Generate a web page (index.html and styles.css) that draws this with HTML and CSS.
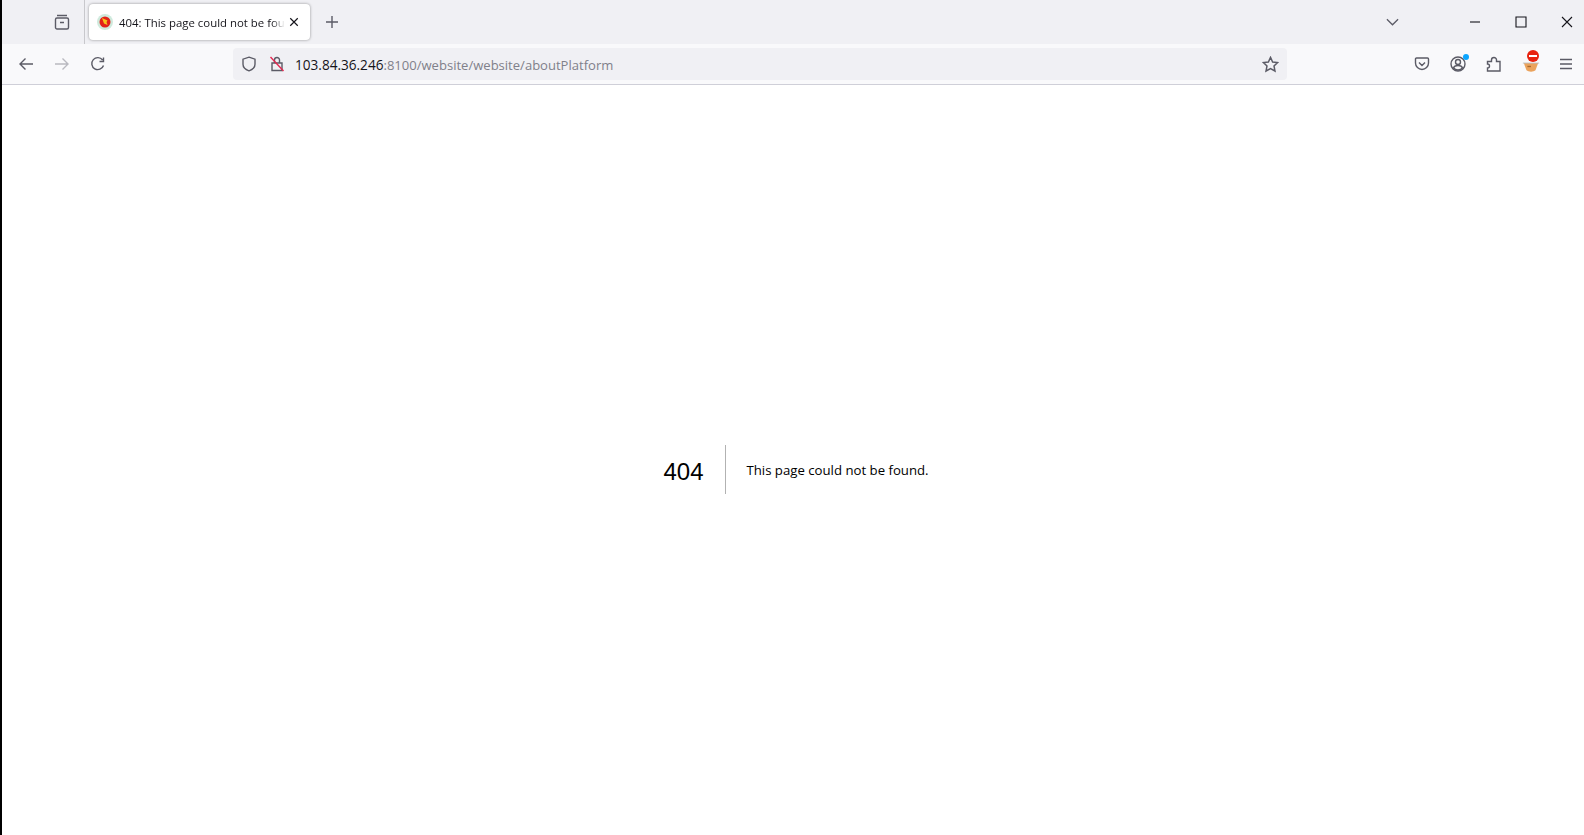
FILE: index.html
```html
<!DOCTYPE html>
<html>
<head>
    <title>404: This page could not be found.</title>
    <link rel="stylesheet" href="styles.css">
</head>
<body>
<div class="screen">

    <!-- tab strip -->
    <div class="tabbar">
        <div class="tabbar-left">
            <svg class="icon view-btn" viewBox="0 0 18 18"><path d="M4 2.500h10M2.500 6.500c0-.8.7-1.500 1.500-1.500h10c.8 0 1.500.7 1.500 1.500v8c0 .8-.7 1.500-1.500 1.500H4c-.8 0-1.500-.7-1.500-1.500zM7 9.500h4"/></svg>
        </div>
        <div class="tab">
            <svg class="favicon" viewBox="0 0 16 16"><circle cx="8" cy="8" r="8" fill="#cfeadd"/><circle cx="8" cy="8" r="5.500" fill="#e2231a"/><path d="M5 4l5.500 2.500-1 1.500 1 3-3.500-1.500z" fill="#f6c21c"/></svg>
            <span class="tab-title">404: This page could not be found.</span>
            <svg class="icon tab-close" viewBox="0 0 12 12"><path d="M1.500 1.500l9 9M10.500 1.500l-9 9"/></svg>
        </div>
        <svg class="icon new-tab" viewBox="0 0 14 14"><path d="M7 1v12M1 7h12"/></svg>
        <div class="spacer"></div>
        <svg class="icon tabs-menu" viewBox="0 0 14 8"><path d="M1 1l6 6 6-6"/></svg>
        <div class="win-btns">
            <svg class="win-icon" viewBox="0 0 12 12"><path d="M1 6h10"/></svg>
            <svg class="win-icon" viewBox="0 0 12 12"><path d="M1 1h10v10H1z"/></svg>
            <svg class="win-icon" viewBox="0 0 12 12"><path d="M1 1l10 10M11 1L1 11"/></svg>
        </div>
    </div>

    <!-- nav bar -->
    <div class="toolbar">
        <div class="nav-btns">
            <svg class="icon nav" viewBox="0 0 16 16"><path d="M15 8H2M7.500 2.500L2 8l5.500 5.500"/></svg>
            <svg class="icon nav disabled" viewBox="0 0 16 16"><path d="M1 8h13M8.500 2.500L14 8l-5.500 5.500"/></svg>
            <svg class="icon nav" viewBox="0 0 16 16"><path d="M13.500 9.500A6 6 0 1 1 12.600 4M13.500 1.500v4h-4"/></svg>
        </div>
        <div class="urlbar">
            <svg class="icon url-icon" viewBox="0 0 16 16"><path d="M8 1.200l6 2v5c0 3.200-2.600 5.400-6 6.600-3.400-1.200-6-3.400-6-6.600v-5z"/></svg>
            <svg class="icon url-icon lock" viewBox="0 0 16 16"><path d="M5.500 7V4a2.500 2.500 0 0 1 5 0V7M3 7h10v7.500H3z"/><path class="slash" d="M1.500 1l13 14"/></svg>
            <span class="url"><span class="host">103.84.36.246</span>:8100/website/website/aboutPlatform</span>
            <svg class="icon star" viewBox="0 0 16 16"><path d="M8 1.300l2 4.300 4.700.6-3.400 3.200.9 4.700L8 11.800l-4.200 2.300.9-4.700L1.300 6.200 6 5.600z"/></svg>
        </div>
        <div class="tools">
            <svg class="icon tool" viewBox="0 0 16 16"><path d="M2.500 2h11c.6 0 1 .4 1 1v4c0 3.600-3 6.500-6.500 6.500S1.500 10.600 1.500 7V3c0-.6.400-1 1-1zM5 6.500l3 3 3-3"/></svg>
            <div class="tool-wrap">
                <svg class="icon tool" viewBox="0 0 16 16"><circle cx="8" cy="8" r="7"/><circle class="solid" cx="8" cy="6" r="2.500"/><path class="solid" d="M3.500 12c.5-1.800 2.500-2.500 4.500-2.500s4 .7 4.500 2.500c-1 1.200-2.700 2-4.500 2s-3.500-.8-4.500-2z"/></svg>
                <span class="dot"></span>
            </div>
            <svg class="icon tool" viewBox="0 0 16 16"><path d="M1.500 5.500H5.500V4a2.500 2.500 0 0 1 5 0V5.500H14V15H1.500V12a2 2 0 0 0 0-4z"/></svg>
            <div class="tool-wrap addon-wrap">
                <svg class="addon" viewBox="0 0 20 20"><path d="M2 9h16l-3 8c-2 2-8 2-10 0z" fill="#eba35c"/><path d="M1 9h18" stroke="#bbb" fill="none"/><path d="M6 12h4v1.500H6z" fill="#a8692e"/></svg>
                <span class="blocked"></span>
            </div>
            <svg class="icon tool" viewBox="0 0 16 16"><path d="M2 3.500h12M2 8h12M2 12.500h12"/></svg>
        </div>
    </div>

    <!-- page -->
    <div class="content">
        <h1 class="code">404</h1>
        <h2 class="message">This page could not be found.</h2>
    </div>

</div>
</body>
</html>
```

FILE: styles.css
```css
html, body {
    margin: 0;
    height: 100%;
    background-color: white;
}

.screen {
    height: 835px;
    border-left: 2px solid black;
    display: flex;
    flex-direction: column;
    overflow: hidden;
    font-family: "Open Sans", "Noto Sans", sans-serif;
}

.icon {
    fill: none;
    stroke: #5b5b66;
    stroke-width: 1.4;
    flex: none;
}

/* tab strip */
.tabbar {
    height: 44px;
    background-color: #f0f0f4;
    display: flex;
    align-items: center;
    flex: none;
}
.tabbar-left {
    width: 83px;
    height: 44px;
    box-sizing: border-box;
    border-right: 1px solid #c8c8cc;
    display: flex;
    align-items: center;
    padding-left: 51px;
}
.view-btn {
    width: 18px;
    height: 18px;
}
.tab {
    width: 221px;
    height: 36px;
    margin-left: 4px;
    box-sizing: border-box;
    padding-left: 8px;
    background-color: white;
    border-radius: 4px;
    box-shadow: 0 0 3px rgba(0, 0, 0, 0.4);
    display: flex;
    align-items: center;
}
.favicon {
    width: 16px;
    height: 16px;
    flex: none;
}
.tab-title {
    width: 166px;
    margin-left: 6px;
    font-size: 11.4px;
    color: #15141a;
    white-space: nowrap;
    overflow: hidden;
    -webkit-mask-image: linear-gradient(to right, black 92%, transparent);
    mask-image: linear-gradient(to right, black 92%, transparent);
}
.tab-close {
    width: 10px;
    height: 10px;
    margin-left: 4px;
    stroke: #15141a;
}
.new-tab {
    width: 14px;
    height: 14px;
    margin-left: 15px;
}
.spacer {
    flex: 1;
}
.tabs-menu {
    width: 13px;
    height: 8px;
    margin-right: 70px;
}
.win-btns {
    display: flex;
    gap: 34px;
    margin-right: 11px;
}
.win-icon {
    width: 12px;
    height: 12px;
    fill: none;
    stroke: #15141a;
    stroke-width: 1.1;
}

/* nav bar */
.toolbar {
    height: 41px;
    box-sizing: border-box;
    background-color: #f9f9fb;
    border-bottom: 1px solid #cfcfd8;
    display: flex;
    align-items: center;
    flex: none;
}
.nav-btns {
    width: 231px;
    display: flex;
    gap: 20px;
    padding-left: 16px;
    box-sizing: border-box;
}
.nav {
    width: 16px;
    height: 16px;
}
.disabled {
    stroke: #b9b9c0;
}
.urlbar {
    width: 1054px;
    height: 32px;
    box-sizing: border-box;
    padding: 0 8px 0 8px;
    background-color: #f0f0f4;
    border-radius: 4px;
    display: flex;
    align-items: center;
}
.url-icon {
    width: 16px;
    height: 16px;
}
.lock {
    margin-left: 12px;
}
.slash {
    stroke: #e22850;
}
.url {
    flex: 1;
    margin-left: 10px;
    padding-top: 1px;
    font-size: 13.05px;
    color: #80808a;
    white-space: nowrap;
}
.host {
    color: #15141a;
    font-size: 13.6px;
}
.star {
    width: 17px;
    height: 17px;
}
.tools {
    flex: 1;
    display: flex;
    align-items: center;
    justify-content: flex-end;
    gap: 20px;
    padding-right: 10px;
}
.tool {
    width: 16px;
    height: 16px;
    display: block;
}
.tool-wrap {
    position: relative;
}
.addon-wrap {
    margin-right: -2px;
}
.dot {
    position: absolute;
    top: -2px;
    right: -3px;
    width: 6px;
    height: 6px;
    border-radius: 50%;
    background-color: #0aa5ff;
}
.addon {
    width: 18px;
    height: 18px;
    display: block;
}
.blocked {
    position: absolute;
    top: -5px;
    left: 5px;
    width: 12px;
    height: 12px;
    border-radius: 50%;
    background: linear-gradient(white, white) center / 8px 2px no-repeat, #e8230f;
}

/* page */
.content {
    flex: 1;
    display: flex;
    align-items: center;
    justify-content: center;
    padding: 19px 0 0 6px;
    background-color: white;
    color: black;
}
.code {
    height: 49px;
    margin: 0 20px 0 0;
    padding-right: 22px;
    border-right: 1px solid rgba(0, 0, 0, 0.3);
    font-family: "Liberation Sans", Arial, sans-serif;
    font-size: 24px;
    font-weight: 500;
    line-height: 53px;
}
.message {
    margin: 0;
    font-size: 13.2px;
    font-weight: normal;
    line-height: 28px;
}
```
